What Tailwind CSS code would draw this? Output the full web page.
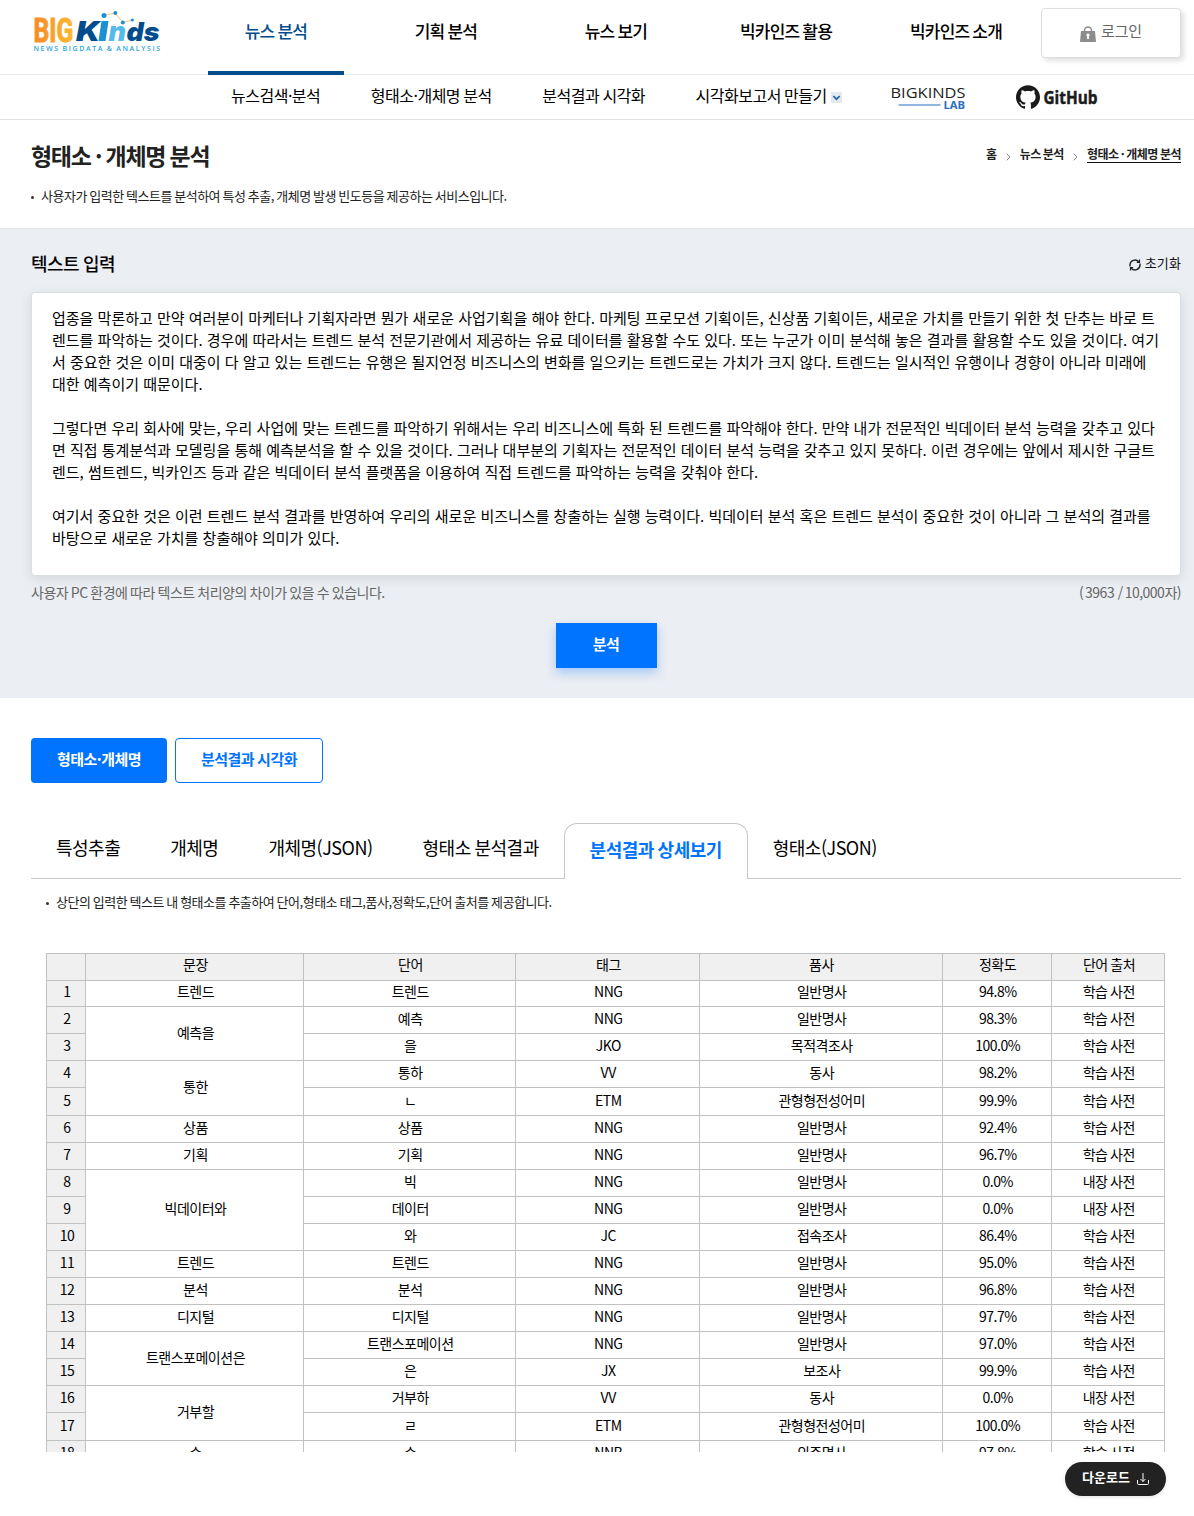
<!DOCTYPE html>
<html lang="ko">
<head>
  <meta charset="UTF-8" />
  <title>형태소 · 개체명 분석 - BIGKinds</title>
  <meta name="viewport" content="width=device-width, initial-scale=1.0" />
  <script src="https://cdn.jsdelivr.net/npm/@tailwindcss/browser@4"></script>
</head>
<body class="bg-white text-black font-['Noto_Sans_CJK_KR',sans-serif] tracking-[-0.5px] [word-spacing:-0.75px] h-[1516px] overflow-hidden">
  <header>
    <div class="flex h-[75px] border-b border-[#ebebeb]">
      <a href="#" class="ml-8 mt-2 w-[130px] h-[48px] shrink-0">
        <svg width="130" height="48" viewBox="32 8 130 48">
          <defs>
            <linearGradient id="big" x1="0" x2="1" y1="0" y2="0">
              <stop offset="0" stop-color="#f58a2a" />
              <stop offset="1" stop-color="#fdb92e" />
            </linearGradient>
          </defs>
          <text x="33.500" y="41.500" font-family="Roboto" font-weight="700" font-size="34" letter-spacing="0" textLength="40" lengthAdjust="spacingAndGlyphs" fill="url(#big)" stroke="url(#big)" stroke-width="1">BIG</text>
          <g font-family="Inter" font-weight="900" font-style="italic" letter-spacing="0">
            <text x="76" y="41" font-size="27" textLength="24" lengthAdjust="spacingAndGlyphs" fill="#004c8c">K</text>
            <text x="108.500" y="41" font-size="27" textLength="17.500" lengthAdjust="spacingAndGlyphs" fill="#56bbeb">n</text>
            <text x="126.500" y="41" font-size="26" textLength="33" lengthAdjust="spacingAndGlyphs" fill="#004c8c">ds</text>
          </g>
          <path d="M101.500 21h7l-3 20h-7z" fill="#1b91d2" />
          <path d="M104 15.500l11-2.500 8 9.500 9-2.500" fill="none" stroke="#f9b04c" stroke-width=".8" />
          <circle cx="104" cy="15.500" r="2.500" fill="#1b91d2" />
          <circle cx="115.300" cy="13" r="2" fill="#1b91d2" />
          <circle cx="122.800" cy="22.500" r="2" fill="#1b91d2" />
          <circle cx="132.300" cy="20" r="1.500" fill="#1b91d2" />
          <text x="33.500" y="50.500" font-family="Open Sans" font-weight="600" font-size="7" textLength="126" fill="#2ba6dc">NEWS BIGDATA &amp; ANALYSIS</text>
        </svg>
      </a>
      <nav class="ml-[29px] flex text-[17px] font-medium tracking-[-0.05em] leading-[26px]">
        <a href="#" class="w-[170px] px-[17px] text-center text-[#004c8c]"><span class="block h-[75px] pt-[18px] border-b-4 border-[#004c8c]">뉴스 분석</span></a>
        <a href="#" class="w-[170px] pt-[18px] text-center">기획 분석</a>
        <a href="#" class="w-[170px] pt-[18px] text-center">뉴스 보기</a>
        <a href="#" class="w-[170px] pt-[18px] text-center">빅카인즈 활용</a>
        <a href="#" class="w-[170px] pt-[18px] text-center">빅카인즈 소개</a>
      </nav>
      <button class="mt-2 w-[140px] h-[50px] shrink-0 flex justify-center gap-[5px] rounded border border-[#dcdfe0] bg-white text-[15px] leading-[22px] tracking-[-0.2px] pt-[11px] text-[#666] shadow-[3px_3px_5px_rgba(0,0,0,0.12)]">
        <svg class="mt-[6px]" width="16" height="17" viewBox="0 0 16 17">
          <path d="M4.500 7V4.500a3.500 3.500 0 0 1 7 0V7" fill="none" stroke="#8c8c8c" stroke-width="1.500" />
          <path d="M1 5h14l1 11H0z" fill="#8c8c8c" />
          <path d="M8 7.500a1.700 1.700 0 0 1 .9 3.100v2.400H7.100v-2.400A1.700 1.700 0 0 1 8 7.500z" fill="#fff" />
        </svg>
        로그인
      </button>
    </div>
    <div class="flex h-[45px] border-b border-[#e1e1e1] pl-[231px] text-[16px] leading-[24px] gap-[50.5px] pt-[8px]">
      <a href="#">뉴스검색·분석</a>
      <a href="#">형태소·개체명 분석</a>
      <a href="#">분석결과 시각화</a>
      <a href="#" class="flex gap-[4px]">시각화보고서 만들기
        <svg class="mt-[9px]" width="11" height="11" viewBox="0 0 11 11">
          <rect width="11" height="11" rx="1" fill="#e6e9ec" />
          <path d="M2.300 4l3.200 3.200L8.700 4" fill="none" stroke="#1c64ad" stroke-width="1.700" />
        </svg>
      </a>
      <a href="#" class="-ml-[2px] pt-px">
        <svg width="76" height="26" viewBox="890 84 76 26">
          <text x="890.500" y="98" font-family="Open Sans" font-size="15" letter-spacing="0" textLength="75" lengthAdjust="spacingAndGlyphs" fill="#222">BIGKINDS</text>
          <path d="M898.500 105h42" stroke="#6b9fdb" stroke-width="1.500" />
          <text x="943.500" y="108.500" font-family="Open Sans" font-weight="700" font-size="10" letter-spacing="0" textLength="21.500" lengthAdjust="spacingAndGlyphs" fill="#2a6cc0">LAB</text>
        </svg>
      </a>
      <a href="#" class="pt-px -ml-[1px]">
        <svg width="90" height="26" viewBox="1016 84 90 26">
          <path transform="translate(1016 85)" fill="#1b1b1b" d="M12 .297c-6.630 0-12 5.373-12 12 0 5.303 3.438 9.800 8.205 11.385.6.113.82-.258.82-.577 0-.285-.010-1.040-.015-2.040-3.338.724-4.042-1.610-4.042-1.610C4.422 18.070 3.633 17.700 3.633 17.700c-1.087-.744.084-.729.084-.729 1.205.084 1.838 1.236 1.838 1.236 1.070 1.835 2.809 1.305 3.495.998.108-.776.417-1.305.76-1.605-2.665-.3-5.466-1.332-5.466-5.930 0-1.310.465-2.380 1.235-3.220-.135-.303-.54-1.523.105-3.176 0 0 1.005-.322 3.300 1.230.96-.267 1.980-.399 3-.405 1.020.006 2.040.138 3 .405 2.280-1.552 3.285-1.230 3.285-1.230.645 1.653.24 2.873.12 3.176.765.84 1.230 1.910 1.230 3.220 0 4.610-2.805 5.625-5.475 5.920.42.36.81 1.096.81 2.220 0 1.606-.015 2.896-.015 3.286 0 .315.21.69.825.57C20.565 22.092 24 17.592 24 12.297c0-6.627-5.373-12-12-12" />
          <text x="1043.500" y="104" font-family="Open Sans" font-weight="700" font-size="18" letter-spacing="0" textLength="54" lengthAdjust="spacingAndGlyphs" fill="#1b1b1b" stroke="#1b1b1b" stroke-width=".5">GitHub</text>
        </svg>
      </a>
    </div>
  </header>

  <section class="h-[108px] px-[31px] pt-[19px] pr-[13px]">
    <div class="flex justify-between">
      <h1 class="text-[23px] leading-[32px] font-bold tracking-[-1.3px] text-[#222]">형태소 · 개체명 분석</h1>
      <ol class="flex text-[12px] leading-[17px] font-bold text-[#222] pt-[6px]">
        <li>홈</li>
        <li class="px-[9px] pt-[8px]"><svg width="5" height="8" viewBox="0 0 5 8"><path d="M.7.7L4 4 .7 7.300" fill="none" stroke="#888" /></svg></li>
        <li>뉴스 분석</li>
        <li class="px-[9px] pt-[8px]"><svg width="5" height="8" viewBox="0 0 5 8"><path d="M.7.7L4 4 .7 7.300" fill="none" stroke="#888" /></svg></li>
        <li class="border-b border-[#111] h-[18px]">형태소 · 개체명 분석</li>
      </ol>
    </div>
    <p class="flex items-center text-[13px] leading-[20px] mt-[15px] text-[#222]"><i class="size-[3px] rounded-full bg-[#333] mr-[7px] mt-[3px]"></i>사용자가 입력한 텍스트를 분석하여 특성 추출, 개체명 발생 빈도등을 제공하는 서비스입니다.</p>
  </section>

  <section class="h-[470px] bg-[#ebeef3] border-t border-[#e3e3e3] pl-[31px] pr-[13px] pt-[21px]">
    <div class="flex justify-between h-[42px]">
      <h2 class="text-[18px] leading-[27px] font-medium text-black">텍스트 입력</h2>
      <button class="flex gap-1 text-[13px] leading-[20px] tracking-[0.1px] h-[26px] pt-[3px] text-[#111]">
        <svg class="mt-[6px]" width="12" height="12" viewBox="0 0 12 12" fill="none" stroke="#222" stroke-width="1.400">
          <path d="M1 7.500V6a5 5 0 0 1 8.800-3.200M11 4.500V6a5 5 0 0 1-8.800 3.200" />
          <path d="M7.800 3.300h2.700V.6M4.200 8.700H1.500v2.700" stroke-width="1.200" />
        </svg>
        초기화
      </button>
    </div>
    <textarea class="block w-full h-[284px] resize-none overflow-hidden outline-none rounded border border-[#dadfe1] bg-white px-[20px] py-[14px] text-[15px] leading-[22px] tracking-normal break-all shadow-[0_3px_12px_rgba(0,0,0,0.1)]">업종을 막론하고 만약 여러분이 마케터나 기획자라면 뭔가 새로운 사업기획을 해야 한다. 마케팅 프로모션 기획이든, 신상품 기획이든, 새로운 가치를 만들기 위한 첫 단추는 바로 트렌드를 파악하는 것이다. 경우에 따라서는 트렌드 분석 전문기관에서 제공하는 유료 데이터를 활용할 수도 있다. 또는 누군가 이미 분석해 놓은 결과를 활용할 수도 있을 것이다. 여기서 중요한 것은 이미 대중이 다 알고 있는 트렌드는 유행은 될지언정 비즈니스의 변화를 일으키는 트렌드로는 가치가 크지 않다. 트렌드는 일시적인 유행이나 경향이 아니라 미래에 대한 예측이기 때문이다.

그렇다면 우리 회사에 맞는, 우리 사업에 맞는 트렌드를 파악하기 위해서는 우리 비즈니스에 특화 된 트렌드를 파악해야 한다. 만약 내가 전문적인 빅데이터 분석 능력을 갖추고 있다면 직접 통계분석과 모델링을 통해 예측분석을 할 수 있을 것이다. 그러나 대부분의 기획자는 전문적인 데이터 분석 능력을 갖추고 있지 못하다. 이런 경우에는 앞에서 제시한 구글트렌드, 썸트렌드, 빅카인즈 등과 같은 빅데이터 분석 플랫폼을 이용하여 직접 트렌드를 파악하는 능력을 갖춰야 한다.

여기서 중요한 것은 이런 트렌드 분석 결과를 반영하여 우리의 새로운 비즈니스를 창출하는 실행 능력이다. 빅데이터 분석 혹은 트렌드 분석이 중요한 것이 아니라 그 분석의 결과를 바탕으로 새로운 가치를 창출해야 의미가 있다.</textarea>
    <div class="flex justify-between text-[14px] leading-[20px] mt-[6px] text-[#666]">
      <p>사용자 PC 환경에 따라 텍스트 처리양의 차이가 있을 수 있습니다.</p>
      <p class="[word-spacing:-1.6px]">( 3963 &nbsp;/ 10,000자)</p>
    </div>
    <button class="block mx-auto mt-[21px] w-[101px] h-[45px] pb-[3px] bg-[#0073ff] text-white text-[15px] font-bold shadow-[0_5px_10px_rgba(0,115,255,0.3)]">분석</button>
  </section>

  <section class="pl-[31px] pr-[13px] pt-[40px]">
    <div class="flex gap-2 text-[15px] font-bold">
      <button class="w-[136px] h-[45px] pb-[3px] rounded bg-[#0073ff] text-white">형태소·개체명</button>
      <button class="w-[148px] h-[45px] pb-[3px] rounded border border-[#0073ff] text-[#0073ff] [word-spacing:-0.75px]">분석결과 시각화</button>
    </div>
    <div class="flex mt-[40px] h-[56px] text-[18px] leading-[27px]">
      <a href="#" class="px-[25px] pt-[11px] border-b border-[#c8c8c8]">특성추출</a>
      <a href="#" class="px-[25px] pt-[11px] border-b border-[#c8c8c8]">개체명</a>
      <a href="#" class="px-[25px] pt-[11px] border-b border-[#c8c8c8]">개체명(JSON)</a>
      <a href="#" class="px-[25px] pt-[11px] border-b border-[#c8c8c8]">형태소 분석결과</a>
      <a href="#" class="w-[184px] text-center pt-[12px] border border-b-0 rounded-t-[13px] border-[#c8c8c8] font-bold text-[#0073ff]">분석결과 상세보기</a>
      <a href="#" class="px-[25px] pt-[11px] border-b border-[#c8c8c8] grow">형태소(JSON)</a>
    </div>
    <p class="flex items-center text-[13px] leading-[20px] mt-[13px] ml-[15px] text-[#222]"><i class="size-[3px] rounded-full bg-[#333] mr-[7px] mt-[3px]"></i>상단의 입력한 텍스트 내 형태소를 추출하여 단어,형태소 태그,품사,정확도,단어 출처를 제공합니다.</p>

    <div class="mt-[41px] ml-[15px] h-[499px] overflow-hidden">
      <table class="table-fixed border-separate border-spacing-0 w-[1119px] border-t border-l border-[#c1c1c1] text-[14px] leading-[20px] text-center">
        <colgroup>
          <col class="w-[39px]" />
          <col class="w-[218px]" />
          <col class="w-[212px]" />
          <col class="w-[184px]" />
          <col class="w-[243px]" />
          <col class="w-[109px]" />
          <col class="w-[113px]" />
        </colgroup>
        <thead>
          <tr class="h-[27px] bg-[#f0f0f0]">
            <th class="p-0 border-r border-b border-[#c1c1c1]"></th>
            <th class="p-0 pl-[2px] pb-[6px] font-normal border-r border-b border-[#c1c1c1]">문장</th>
            <th class="p-0 pl-[2px] pb-[6px] font-normal border-r border-b border-[#c1c1c1]">단어</th>
            <th class="p-0 pl-[2px] pb-[6px] font-normal border-r border-b border-[#c1c1c1]">태그</th>
            <th class="p-0 pl-px pb-[6px] font-normal border-r border-b border-[#c1c1c1]">품사</th>
            <th class="p-0 pl-px pb-[6px] font-normal border-r border-b border-[#c1c1c1]">정확도</th>
            <th class="p-0 pl-[2px] pb-[6px] font-normal border-r border-b border-[#c1c1c1]">단어 출처</th>
          </tr>
        </thead>
        <tbody id="rows"></tbody>
      </table>
    </div>
    <button class="mt-[10px] ml-auto mr-[15px] flex w-[101px] h-[34px] rounded-full bg-[#222] text-white text-[13px] font-bold tracking-normal leading-[20px] pl-[17px] pt-[5px] gap-[7px] shadow-[0_1px_4px_rgba(0,0,0,0.12)]">
      다운로드
      <svg class="mt-[5px] shrink-0" width="12" height="13" viewBox="0 0 12 13" fill="none" stroke="#fff">
        <path d="M.5 8v3.500a1 1 0 0 0 1 1h9a1 1 0 0 0 1-1V8M6 1v8.500M3.500 7L6 9.500 8.500 7" />
      </svg>
    </button>
  </section>

  <script>
    // groups of [sentence word, [[morpheme, tag, part of speech, accuracy, source], ...]]
    const groups = [
      ["트렌드", [["트렌드", "NNG", "일반명사", "94.8%", "학습 사전"]]],
      ["예측을", [["예측", "NNG", "일반명사", "98.3%", "학습 사전"], ["을", "JKO", "목적격조사", "100.0%", "학습 사전"]]],
      ["통한", [["통하", "VV", "동사", "98.2%", "학습 사전"], ["ㄴ", "ETM", "관형형전성어미", "99.9%", "학습 사전"]]],
      ["상품", [["상품", "NNG", "일반명사", "92.4%", "학습 사전"]]],
      ["기획", [["기획", "NNG", "일반명사", "96.7%", "학습 사전"]]],
      ["빅데이터와", [["빅", "NNG", "일반명사", "0.0%", "내장 사전"], ["데이터", "NNG", "일반명사", "0.0%", "내장 사전"], ["와", "JC", "접속조사", "86.4%", "학습 사전"]]],
      ["트렌드", [["트렌드", "NNG", "일반명사", "95.0%", "학습 사전"]]],
      ["분석", [["분석", "NNG", "일반명사", "96.8%", "학습 사전"]]],
      ["디지털", [["디지털", "NNG", "일반명사", "97.7%", "학습 사전"]]],
      ["트랜스포메이션은", [["트랜스포메이션", "NNG", "일반명사", "97.0%", "학습 사전"], ["은", "JX", "보조사", "99.9%", "학습 사전"]]],
      ["거부할", [["거부하", "VV", "동사", "0.0%", "내장 사전"], ["ㄹ", "ETM", "관형형전성어미", "100.0%", "학습 사전"]]],
      ["수", [["수", "NNB", "의존명사", "97.8%", "학습 사전"]]]
    ];
    const heights = { 1: "h-[26px]", 5: "h-[28px]", 17: "h-[28px]" };
    let n = 0;
    let html = "";
    groups.forEach(([word, items]) => {
      items.forEach((item, i) => {
        n++;
        const pad = heights[n] === "h-[28px]" ? "pb-[3px]" : "pb-[5px]";
        const wordPad = items.length > 1 ? "pb-[4px]" : "pb-[5px]";
        html += `<tr class="${heights[n] || "h-[27px]"}">`;
        html += `<th class="p-0 pl-[2px] ${pad} font-normal bg-[#f0f0f0] border-r border-b border-[#c1c1c1]">${n}</th>`;
        if (i === 0) html += `<td rowspan="${items.length}" class="p-0 pl-[2px] ${wordPad} border-r border-b border-[#c1c1c1]">${word}</td>`;
        item.forEach(v => html += `<td class="p-0 pl-[1.5px] ${pad} border-r border-b border-[#c1c1c1]">${v}</td>`);
        html += "</tr>";
      });
    });
    document.getElementById("rows").innerHTML = html;
  </script>
</body>
</html>
